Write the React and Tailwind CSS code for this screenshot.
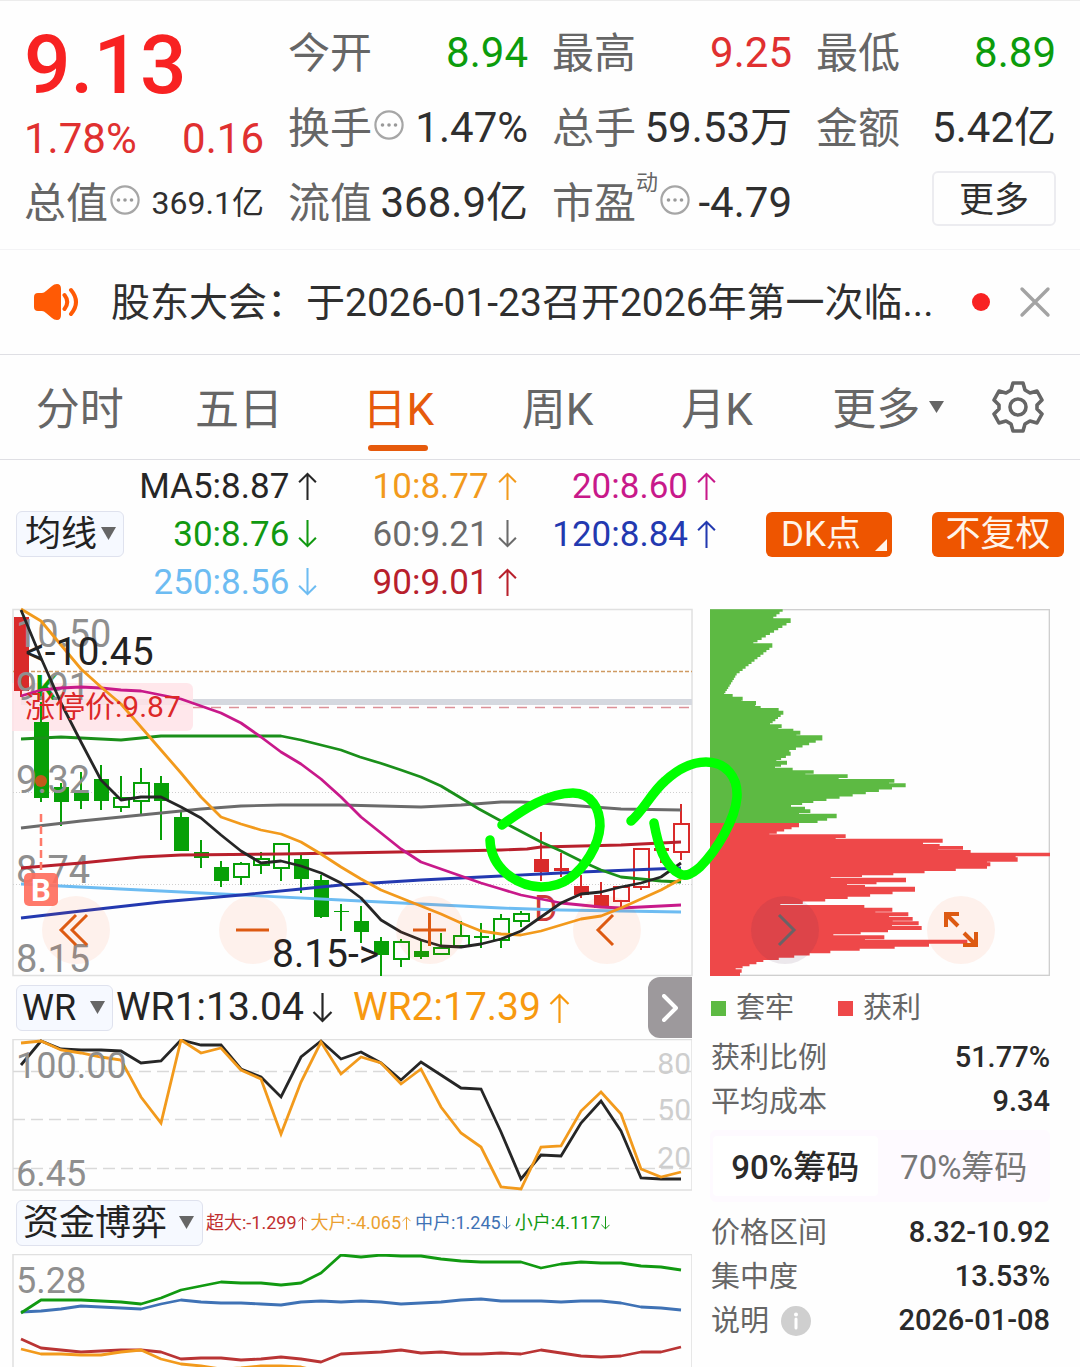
import React from "react";

const X0 = 21;
const STEP = 20;
const series = (values) => values.map((v, i) => `${X0 + STEP * i},${v}`).join(" ");

const MA5 = [610, 658, 703, 742, 780, 800, 797, 797, 807, 818, 835, 851, 863, 861, 866, 873, 883, 898, 920, 932, 940, 946, 947, 944, 939, 931, 917, 903, 894, 892, 887, 883, 877, 863];
const MA10 = [609, 621, 645, 669, 687, 704, 727, 750, 773, 797, 817, 824, 830, 834, 842, 854, 867, 879, 890, 898, 906, 914, 923, 931, 934, 935, 931, 925, 919, 916, 908, 899, 890, 879];
const MA20 = [696, 690, 688, 687, 688, 690, 691, 695, 699, 706, 713, 723, 737, 752, 764, 779, 797, 817, 833, 849, 862, 869, 876, 883, 889, 895, 899, 903, 905, 907, 908, 907, 906, 905];
const MA30 = "21,739 61,737 81,738 121,740 141,738 161,736 201,736 241,736 281,736 301,740 321,745 341,750 360,757 380,763 401,770 421,777 441,786 461,798 479,809 501,821 541,842 561,851 581,861 601,870 621,877 641,879 661,881 681,882";
const MA60 = "21,828 81,821 161,813 201,809 241,806 281,805 341,805 421,807 461,805 501,802 521,802 541,803 580,806 621,809 681,810";
const MA90 = "21,868 81,863 141,857 181,855 281,854 341,853 453,851 501,850 527,849 541,847 621,845 681,842";
const MA120 = "21,918 81,911 161,902 241,895 301,889 341,885 421,880 501,876 541,874 581,872 681,868";
const MA250 = "21,884 60,886 242,895 341,900 421,904 501,908 561,910 681,912";

// high, low, body top, body bottom, colour, hollow
const CANDLES = [
  [617, 697, 617, 691, "r", 0], [702, 802, 722, 798, "g", 0], [783, 826, 787, 802, "g", 0], [772, 809, 793, 801, "g", 0],
  [765, 810, 779, 801, "g", 0], [776, 812, 797, 808, "g", 1], [768, 814, 782, 802, "g", 1], [776, 840, 783, 801, "g", 0],
  [812, 851, 817, 851, "g", 0], [840, 868, 852, 858, "g", 0], [861, 887, 867, 881, "g", 0], [862, 885, 863, 878, "g", 1],
  [852, 874, 858, 866, "g", 1], [843, 881, 843, 869, "g", 1], [854, 893, 859, 879, "g", 0], [875, 918, 880, 917, "g", 0],
  [904, 931, 911, 912, "g", 0], [906, 943, 921, 932, "g", 0], [937, 976, 941, 955, "g", 0], [939, 967, 941, 960, "g", 1],
  [940, 959, 951, 957, "g", 0], [933, 955, 947, 955, "g", 1], [921, 947, 935, 947, "g", 1], [923, 948, 936, 938, "g", 0],
  [914, 948, 918, 941, "g", 1], [911, 927, 913, 922, "g", 1], [832, 881, 859, 872, "r", 0], [853, 877, 868, 871, "r", 0],
  [875, 898, 886, 895, "r", 0], [882, 908, 895, 908, "r", 0], [886, 907, 886, 902, "r", 1], [848, 890, 848, 888, "r", 1],
  [848, 863, 848, 851, "r", 0], [804, 860, 823, 853, "r", 1],
];

const WR1 = [1065, 1041, 1049, 1050, 1050, 1051, 1063, 1061, 1040, 1045, 1045, 1069, 1077, 1097, 1057, 1041, 1059, 1052, 1063, 1080, 1062, 1075, 1088, 1089, 1132, 1179, 1155, 1156, 1123, 1101, 1131, 1178, 1179, 1179];
const WR2 = [1043, 1041, 1050, 1053, 1057, 1060, 1097, 1123, 1040, 1053, 1048, 1070, 1079, 1134, 1082, 1042, 1074, 1057, 1063, 1084, 1069, 1107, 1133, 1147, 1187, 1189, 1147, 1146, 1111, 1092, 1114, 1169, 1177, 1172];

const SMALL = [1313, 1300, 1300, 1300, 1301, 1302, 1304, 1298, 1290, 1286, 1282, 1283, 1283, 1285, 1283, 1273, 1255, 1257, 1255, 1256, 1256, 1259, 1261, 1262, 1262, 1262, 1268, 1264, 1262, 1263, 1263, 1266, 1267, 1270];
const MIDDLE = [1312, 1311, 1309, 1306, 1307, 1308, 1309, 1304, 1300, 1302, 1303, 1303, 1304, 1305, 1302, 1301, 1302, 1301, 1302, 1304, 1303, 1302, 1300, 1299, 1301, 1301, 1301, 1302, 1301, 1301, 1303, 1307, 1308, 1310];
const HUGE = [1339, 1348, 1350, 1352, 1351, 1350, 1350, 1352, 1359, 1358, 1358, 1360, 1359, 1357, 1359, 1362, 1354, 1353, 1352, 1350, 1353, 1352, 1354, 1354, 1353, 1354, 1350, 1353, 1356, 1357, 1356, 1352, 1352, 1347];
const BIG = [1349, 1354, 1354, 1355, 1355, 1352, 1350, 1359, 1364, 1366, 1369, 1368, 1366, 1366, 1367, 1372];

const TRAPPED = [[248, 28], [220, 50], [272, 55], [272, 62], [160, 127], [217, 130], [217, 136], [110, 220], [72, 280], [98, 282], [98, 288], [128, 290], [128, 297], [123, 302], [168, 303], [168, 310], [165, 316], [182, 318], [182, 323], [236, 324], [236, 330], [250, 332], [250, 338], [210, 370], [245, 373], [245, 380], [235, 384], [280, 386], [280, 390], [301, 392], [301, 399], [289, 404], [367, 406], [367, 414], [268, 450], [272, 455], [272, 461], [229, 480], [261, 482], [261, 489], [225, 500], [278, 503], [278, 509], [341, 511], [341, 517], [316, 521], [443, 523], [443, 530], [416, 534], [583, 537], [583, 544], [567, 548], [617, 550], [617, 558], [576, 562], [340, 603], [273, 615], [315, 620], [315, 626], [331, 628], [331, 634], [297, 639], [410, 641], [410, 648], [324, 669]];
const PROFIT = [[297, 669], [297, 675], [208, 701], [437, 703], [437, 709], [407, 714], [728, 716], [728, 723], [669, 728], [719, 732], [719, 736], [789, 738], [789, 745], [714, 749], [812, 750], [812, 757], [1050, 758], [1050, 766], [947, 769], [953, 772], [953, 779], [861, 785], [871, 787], [871, 793], [861, 799], [580, 820], [392, 831], [618, 833], [618, 841], [441, 853], [495, 855], [495, 859], [645, 860], [645, 868], [241, 912], [493, 915], [493, 922], [577, 923], [577, 931], [526, 935], [625, 937], [625, 944], [567, 949], [638, 951], [638, 958], [578, 962], [656, 964], [656, 971], [576, 976], [665, 978], [665, 986], [564, 990], [400, 1003], [553, 1006], [553, 1013], [495, 1018], [802, 1019], [802, 1027], [687, 1031], [584, 1040], [479, 1046], [391, 1052], [329, 1060], [190, 1080], [107, 1105], [125, 1108], [125, 1116], [120, 1118], [120, 1128]];

// Stepped outline made of thin horizontal bars growing from the left edge
function steppedPath(points) {
  let d = `M30 ${points[0][1]}H${points[0][0]}`;
  for (let i = 1; i < points.length; i++) {
    const [xa, ya] = points[i - 1];
    const [xb, yb] = points[i];
    const n = Math.max(1, Math.round((yb - ya) / 7));
    for (let k = 1; k <= n; k++) {
      d += `V${ya + ((yb - ya) * k) / n}H${xa + ((xb - xa) * k) / n}`;
    }
  }
  return `${d}H30Z`;
}

function Arrow({ up, className }) {
  return (
    <svg viewBox="0 0 20 30" className={className} fill="none" stroke="currentColor" strokeWidth="2.2" role="img" aria-label={up ? "上升" : "下降"}>
      {up ? <path d="M10 30V2M1 11L10 2L19 11" /> : <path d="M10 0V28M1 19L10 28L19 19" />}
    </svg>
  );
}

function Dots() {
  return (
    <svg viewBox="0 0 30 30" className="mb-2 ml-[2px] size-[30px] shrink-0" fill="none" stroke="#a6a6a6" strokeWidth="2.2" aria-hidden="true">
      <circle cx="15" cy="15" r="13.6" />
      <g fill="#999" stroke="none">
        <circle cx="8.5" cy="15" r="1.8" />
        <circle cx="15" cy="15" r="1.8" />
        <circle cx="21.5" cy="15" r="1.8" />
      </g>
    </svg>
  );
}

function Stat({ label, sup, dots, value, tone = "text-[#2f2f2f]", size = "text-[42px]" }) {
  return (
    <div className="flex h-[75px] items-center justify-between whitespace-nowrap">
      <dt className="flex items-center pt-[2px] text-[#666]">
        {label}
        {sup && <sup className="mb-5 text-[22px] leading-none">{sup}</sup>}
        {dots && <Dots />}
      </dt>
      <dd className={`${size} ${tone}`}>{value}</dd>
    </div>
  );
}

function Picker({ label, width, pad, gap, options }) {
  return (
    <label className={`relative block h-[46px] shrink-0 ${width}`}>
      <select aria-label={label} className={`h-full w-full appearance-none rounded-md border border-[#dfe2ee] bg-[#f6f9ff] ${pad} text-[36px] leading-none text-[#222] outline-none`}>
        {options.map((o) => <option key={o}>{o}</option>)}
      </select>
      <svg viewBox="0 0 15 13" className={`pointer-events-none absolute top-4 ${gap} h-[13px] w-[15px]`} aria-hidden="true">
        <path d="M0 0H15L7.5 13Z" fill="#666" />
      </svg>
    </label>
  );
}

const TABS = ["分时", "五日", "日K", "周K", "月K", "更多"];

const AVERAGES = [
  ["MA5:8.87", true, "text-[#262626]"], ["10:8.77", true, "text-[#f29a1c]"], ["20:8.60", true, "text-[#c8198a]"],
  ["30:8.76", false, "text-[#119911]"], ["60:9.21", false, "text-[#6b6b6b]"], ["120:8.84", true, "text-[#2339b0]"],
  ["250:8.56", false, "text-[#6dbcf2]"], ["90:9.01", true, "text-[#b8202c]"],
];

function CandleChart() {
  return (
    <svg viewBox="12 609 680 367" className="block h-auto w-full overflow-visible" fontSize="38" role="img" aria-label="日K线图">
      <rect x="13" y="609.5" width="679" height="366" fill="none" stroke="#e0e0e0" strokeWidth="1.5" />
      <g stroke="#cfcfcf" strokeDasharray="1 2">
        <path d="M13 792.5H692M13 884.5H692" />
      </g>
      <path d="M21 702H692" stroke="#d5d8df" strokeWidth="6" />
      <path d="M12 683H187A6 6 0 0 1 193 689V725A6 6 0 0 1 187 731H12Z" fill="#ffe3e8" fillOpacity="0.85" />
      <path d="M13 671.5H692" stroke="#cf9a62" strokeWidth="1.5" strokeDasharray="4 2" />
      <path d="M193 707.5H692" stroke="#dc9098" strokeWidth="1.5" strokeDasharray="10 8" />
      {CANDLES.map(([high, low, top, bottom, tone, hollow], i) => {
        const x = X0 + STEP * i;
        const color = tone === "r" ? "#d92a2a" : "#07a007";
        return (
          <g key={i} stroke={color} strokeWidth="2">
            <path d={hollow ? `M${x} ${high}V${top}M${x} ${bottom}V${low}` : `M${x} ${high}V${low}`} />
            {hollow
              ? <rect x={x - 7} y={top + 1} width="15" height={bottom - top - 2} fill="none" />
              : <rect x={x - 7} y={top} width="15" height={bottom - top} fill={color} stroke="none" />}
          </g>
        );
      })}
      <text x="35" y="700" fontSize="35" fontWeight="500" fill="#07a007">K</text>
      <text x="534" y="921" fontSize="36" fill="#cf3a3a">D</text>
      <g fill="#8f8f8f">
        <text x="16" y="647">10.50</text>
        <text x="16" y="700">9.91</text>
        <text x="16" y="793">9.32</text>
        <text x="16" y="883">8.74</text>
        <text x="16" y="972">8.15</text>
      </g>
      <g fill="none" strokeWidth="2.8" strokeLinejoin="round">
        <polyline points={MA60} stroke="#6b6b6b" />
        <polyline points={MA250} stroke="#6dbcf2" />
        <polyline points={MA90} stroke="#b8202c" />
        <polyline points={MA120} stroke="#2339b0" />
        <polyline points={MA30} stroke="#1a8f1a" />
        <polyline points={series(MA20)} stroke="#c8198a" />
        <polyline points={series(MA10)} stroke="#f29a1c" />
        <polyline points={series(MA5)} stroke="#262626" />
      </g>
      <text x="25" y="717" fontSize="30" fill="#dc2828">涨停价:9.87</text>
      <g fontSize="39" fill="#222">
        <text x="25" y="665">&lt;-10.45</text>
        <text x="272" y="967">8.15-&gt;</text>
      </g>
      <circle cx="41" cy="781" r="6" fill="#c25a1a" />
      <path d="M41 814V872" stroke="#ff7a6a" strokeWidth="2.5" strokeDasharray="8 4" />
      <rect x="24" y="873" width="34" height="33" rx="5" fill="#ff6f5e" fillOpacity="0.92" />
      <text x="41" y="901" fontSize="31" fontWeight="700" fill="#fff" textAnchor="middle">B</text>
    </svg>
  );
}

function Scribbles() {
  return (
    <svg viewBox="12 609 680 367" className="pointer-events-none absolute inset-0 z-20 h-full w-full overflow-visible" fill="none" stroke="#00ff00" strokeWidth="9.5" strokeLinecap="round" aria-hidden="true">
      <path d="M502 825C524 809 548 793 573 793C591 793 600 808 600 826C599 846 584 868 570 878C562 884 552 887 541 887C516 886 491 868 490 840" />
      <path d="M631 821C643 811 652 792 665 781C678 769 692 762 706 762C726 762 738 777 737 797C735 820 717 850 700 867C692 874 686 877 680 874C664 866 658 845 654 823" />
    </svg>
  );
}

function RoundButton({ label, dark, children }) {
  return (
    <button aria-label={label} className={dark ? "size-[68px] rounded-full bg-[#502850]/10" : "size-[68px] rounded-full bg-[#ff5a1e]/8"}>
      <svg viewBox="0 0 68 68" className="size-full" fill="none" stroke={dark ? "#6b6266" : "#dd5a12"} strokeWidth="3">
        {children}
      </svg>
    </button>
  );
}

function WrChart() {
  return (
    <svg viewBox="12 1039 680 152" className="block h-auto w-full" fontSize="36" role="img" aria-label="WR指标图">
      <rect x="13" y="1039.5" width="679" height="150.5" fill="none" stroke="#e0e0e0" strokeWidth="1.5" />
      <path d="M13 1071.5H692M13 1119.5H692M13 1168.5H692" stroke="#d9d9d9" strokeWidth="1.3" strokeDasharray="12 6" />
      <g fill="none" strokeWidth="2.8" strokeLinejoin="miter">
        <polyline points={series(WR1)} stroke="#262626" />
        <polyline points={series(WR2)} stroke="#f29a1c" />
      </g>
      <g fill="#8f8f8f">
        <text x="16" y="1078">100.00</text>
        <text x="16" y="1186">6.45</text>
      </g>
      <g fill="#cecece" fontSize="30" textAnchor="end">
        <text x="691" y="1074">80</text>
        <text x="691" y="1120">50</text>
        <text x="691" y="1168">20</text>
      </g>
    </svg>
  );
}

function FundChart() {
  return (
    <svg viewBox="12 1254 680 113" className="block h-auto w-full overflow-hidden" fontSize="36" role="img" aria-label="资金博弈图">
      <path d="M13 1367V1254.5H692V1367" fill="none" stroke="#e0e0e0" strokeWidth="1.5" />
      <text x="16" y="1293" fill="#8f8f8f">5.28</text>
      <g fill="none" strokeWidth="2.8" strokeLinejoin="round">
        <polyline points={series(HUGE)} stroke="#b93434" />
        <polyline points={series(BIG)} stroke="#f29a1c" />
        <polyline points={series(MIDDLE)} stroke="#3f72b5" />
        <polyline points={series(SMALL)} stroke="#119911" />
      </g>
    </svg>
  );
}

function Row({ label, value, info }) {
  return (
    <div className="flex h-11 items-center justify-between text-[29px] leading-none">
      <dt className="flex items-center gap-3 pt-[2px] text-[#666]">
        <span>{label}</span>
        {info && (
          <svg viewBox="0 0 30 30" className="size-[30px]" aria-hidden="true">
            <circle cx="15" cy="15" r="15" fill="#cfcfcf" />
            <circle cx="15" cy="8.5" r="2" fill="#fff" />
            <path d="M15 13V22" stroke="#fff" strokeWidth="3" strokeLinecap="round" />
          </svg>
        )}
      </dt>
      <dd className="font-medium text-[#2a2a2a]">{value}</dd>
    </div>
  );
}

export default function App() {
  return (
    <main className="w-full overflow-x-clip bg-[#fefefe] font-['Roboto','Noto_Sans_CJK_SC',sans-serif] text-[#2f2f2f]">
      <section className="grid grid-cols-4 gap-x-6 border-y border-t-[#ececec] border-b-[#f3f3f5] px-6 pt-[14px] pb-[9px] text-[42px] leading-none">
        <div>
          <div className="h-[150px] pt-[8px] whitespace-nowrap">
            <p className="text-[82px] leading-[84px] font-medium text-[#f82222]">9.13</p>
            <p className="mt-[11px] flex justify-between text-[#e03030]">
              <span>1.78%</span>
              <span>0.16</span>
            </p>
          </div>
          <dl><Stat label="总值" dots value="369.1亿" size="text-[32px]" /></dl>
        </div>
        <dl>
          <Stat label="今开" value="8.94" tone="text-[#0c9c0c]" />
          <Stat label="换手" dots value="1.47%" />
          <Stat label="流值" value="368.9亿" />
        </dl>
        <dl>
          <Stat label="最高" value="9.25" tone="text-[#e03030]" />
          <Stat label="总手" value="59.53万" />
          <Stat label="市盈" sup="动" dots value="-4.79" />
        </dl>
        <div>
          <dl>
            <Stat label="最低" value="8.89" tone="text-[#0c9c0c]" />
            <Stat label="金额" value="5.42亿" />
          </dl>
          <div className="flex h-[75px] items-center justify-end pb-2">
            <button className="h-[55px] w-[124px] rounded-md border-2 border-[#ececf0] pt-1 text-[35px] leading-none">更多</button>
          </div>
        </div>
      </section>

      <section className="flex h-[105px] items-center border-b border-[#dfdfe4] pr-[29px] pl-[33px]">
        <svg viewBox="0 0 46 38" className="h-[38px] w-[46px] shrink-0" aria-hidden="true">
          <path d="M1 14Q1 10 5 10H9Q11 10 13 8L19 3Q21 1 24 1Q28 1 28 6V32Q28 37 24 37Q21 37 19 35L13 30Q11 28 9 28H5Q1 28 1 24Z" fill="#ff5a05" />
          <path d="M31.500 12Q37 19 31.500 26M38 7Q48 19 38 31" fill="none" stroke="#ff5a05" strokeWidth="4" strokeLinecap="round" />
        </svg>
        <p className="ml-8 min-w-0 flex-1 truncate pt-[2px] text-[39px]">股东大会：于2026-01-23召开2026年第一次临...</p>
        <span className="ml-4 size-[18px] shrink-0 rounded-full bg-[#f82222]" />
        <button aria-label="关闭" className="ml-[29px] shrink-0">
          <svg viewBox="0 0 32 32" className="size-8" stroke="#a3a3a3" strokeWidth="3.4" strokeLinecap="round">
            <path d="M3 3L29 29M29 3L3 29" />
          </svg>
        </button>
      </section>

      <nav className="grid h-[105px] grid-cols-[repeat(6,1fr)_124px] border-b border-[#dfdfe4]">
        {TABS.map((tab, i) => (
          <button key={tab} className={i === 2 ? "relative pt-[6px] text-[44px] leading-none text-[#e65a0c]" : "relative pt-[6px] text-[44px] leading-none text-[#666]"}>
            {tab}
            {i === 5 && (
              <svg viewBox="0 0 15 12" className="-mr-6 ml-[9px] inline-block h-3 w-[15px] align-[12px]" aria-hidden="true">
                <path d="M0 0H15L7.5 12Z" fill="#666" />
              </svg>
            )}
            {i === 2 && <span className="absolute inset-x-0 bottom-2 mx-auto h-[6px] w-[60px] rounded-full bg-[#e65a0c]" />}
          </button>
        ))}
        <button aria-label="设置" className="flex items-center justify-center">
          <svg viewBox="0 0 52 52" className="size-[52px]" fill="none" stroke="#666" strokeWidth="3.6" strokeLinejoin="round" aria-hidden="true">
            <path d="M21 2H31L33 9L38 12L45 10L50 19L45 24V28L50 33L45 42L38 40L33 43L31 50H21L19 43L14 40L7 42L2 33L7 28V24L2 19L7 10L14 12L19 9Z" />
            <circle cx="26" cy="26" r="8" />
          </svg>
        </button>
      </nav>

      <section className="flex items-center px-4 pt-[2px] pb-[3px]">
        <Picker label="均线" width="w-[108px]" pad="pl-2" gap="right-2" options={["均线"]} />
        <ul className="grid w-[55vw] shrink-0 grid-cols-[194fr_200fr_200fr] pr-[2px] text-[35px] leading-none">
          {AVERAGES.map(([text, up, tone]) => (
            <li key={text} className={`flex h-12 items-center justify-end gap-[9px] whitespace-nowrap ${tone}`}>
              {text}
              <Arrow up={up} className="h-7 w-[19px]" />
            </li>
          ))}
        </ul>
        <div className="flex flex-1 justify-end gap-10 text-[35px] leading-none whitespace-nowrap text-[#fff4ea]">
          <button className="relative h-[45px] w-[126px] rounded-md bg-[#ee5500] pr-4">
            DK点
            <svg viewBox="0 0 12 12" className="absolute right-[5px] bottom-[6px] size-3" aria-hidden="true">
              <path d="M12 0V12H0Z" fill="#fff4ea" />
            </svg>
          </button>
          <button className="h-[45px] w-[132px] rounded-md bg-[#ee5500]">不复权</button>
        </div>
      </section>

      <div className="grid grid-cols-[2fr_1fr] gap-[18px] pr-[30px] pl-3">
        <div>
          <div className="relative z-10">
            <CandleChart />
            <div className="absolute right-[51px] bottom-3 left-[30px] flex justify-between">
              <RoundButton label="向前翻页"><path d="M45 19L30 34L45 49M34 19L19 34L34 49" /></RoundButton>
              <RoundButton label="缩小"><path d="M17 34H50" /></RoundButton>
              <RoundButton label="放大"><path d="M17 34H50M33.500 17V50" /></RoundButton>
              <RoundButton label="向前"><path d="M40 19L25 34L40 49" /></RoundButton>
            </div>
            <Scribbles />
          </div>

          <div className="flex h-[63px] items-center pl-1 text-[39px] leading-none whitespace-nowrap">
            <Picker label="指标" width="w-[97px]" pad="pl-[5px]" gap="right-2" options={["WR"]} />
            <span className="ml-[3px] flex items-center gap-[8px] text-[#262626]">WR1:13.04<Arrow className="h-[30px] w-[21px]" /></span>
            <span className="ml-5 flex items-center gap-[8px] text-[#f7990f]">WR2:17.39<Arrow up className="h-[30px] w-[21px]" /></span>
            <button aria-label="下一个指标" className="ml-auto flex h-[61px] w-[44px] items-center justify-center rounded-l-xl bg-[#9d999c]">
              <svg viewBox="0 0 16 28" className="h-7 w-4" fill="none" stroke="#fff" strokeWidth="4" strokeLinecap="round" strokeLinejoin="round">
                <path d="M2 2L14 14L2 26" />
              </svg>
            </button>
          </div>
          <WrChart />

          <div className="flex h-[63px] items-center pl-1 whitespace-nowrap">
            <Picker label="副图指标" width="w-[187px]" pad="pl-[6px]" gap="right-[9px]" options={["资金博弈"]} />
            <ul className="ml-[3px] flex gap-1 text-[18px] leading-none">
              <li className="flex items-center gap-px text-[#c03030]">超大:-1.299<Arrow up className="h-5 w-[9px]" /></li>
              <li className="flex items-center gap-px text-[#eba030]">大户:-4.065<Arrow up className="h-5 w-[9px]" /></li>
              <li className="flex items-center gap-px text-[#3f72b5]">中户:1.245<Arrow className="h-5 w-[9px]" /></li>
              <li className="flex items-center gap-px text-[#119911]">小户:4.117<Arrow className="h-5 w-[9px]" /></li>
            </ul>
          </div>
          <FundChart />
        </div>

        <aside>
          <div className="relative">
            <svg viewBox="30 27 1020 1101" className="block h-auto w-full" role="img" aria-label="筹码分布图">
              <rect x="32" y="29" width="1016" height="1097" fill="none" stroke="#cfcfcf" strokeWidth="4" />
              <path d={steppedPath(TRAPPED)} fill="#5dba43" />
              <path d={steppedPath(PROFIT)} fill="#ee4849" />
            </svg>
            <div className="absolute right-[55px] bottom-3 left-[41px] flex justify-between">
              <RoundButton label="向后" dark><path d="M28 19L43 34L28 49" /></RoundButton>
              <RoundButton label="全屏">
                <path d="M32 18H19V31M19 18L31 30M37 37L49 49M49 36V49H36" strokeWidth="4" />
              </RoundButton>
            </div>
          </div>

          <ul className="flex h-[59px] items-center gap-[44px] pt-[6px] pl-px text-[29px] leading-none text-[#666]">
            <li className="flex items-center gap-[10px]"><span className="size-[15px] bg-[#5dba43]" />套牢</li>
            <li className="flex items-center gap-[10px]"><span className="size-[15px] bg-[#ee4849]" />获利</li>
          </ul>
          <dl className="pl-px">
            <Row label="获利比例" value="51.77%" />
            <Row label="平均成本" value="9.34" />
          </dl>
          <div className="mt-[7px] grid h-[72px] grid-cols-2 gap-1 rounded-md bg-[#fefaff] py-[6px] pr-1 pl-[3px] text-[33px] leading-none whitespace-nowrap">
            <button className="rounded bg-white pt-[2px] font-medium text-[#2a2a2a]">90%筹码</button>
            <button className="pt-[2px] text-[#777]">70%筹码</button>
          </div>
          <dl className="mt-2 pl-px">
            <Row label="价格区间" value="8.32-10.92" />
            <Row label="集中度" value="13.53%" />
            <Row label="说明" value="2026-01-08" info />
          </dl>
        </aside>
      </div>
    </main>
  );
}
